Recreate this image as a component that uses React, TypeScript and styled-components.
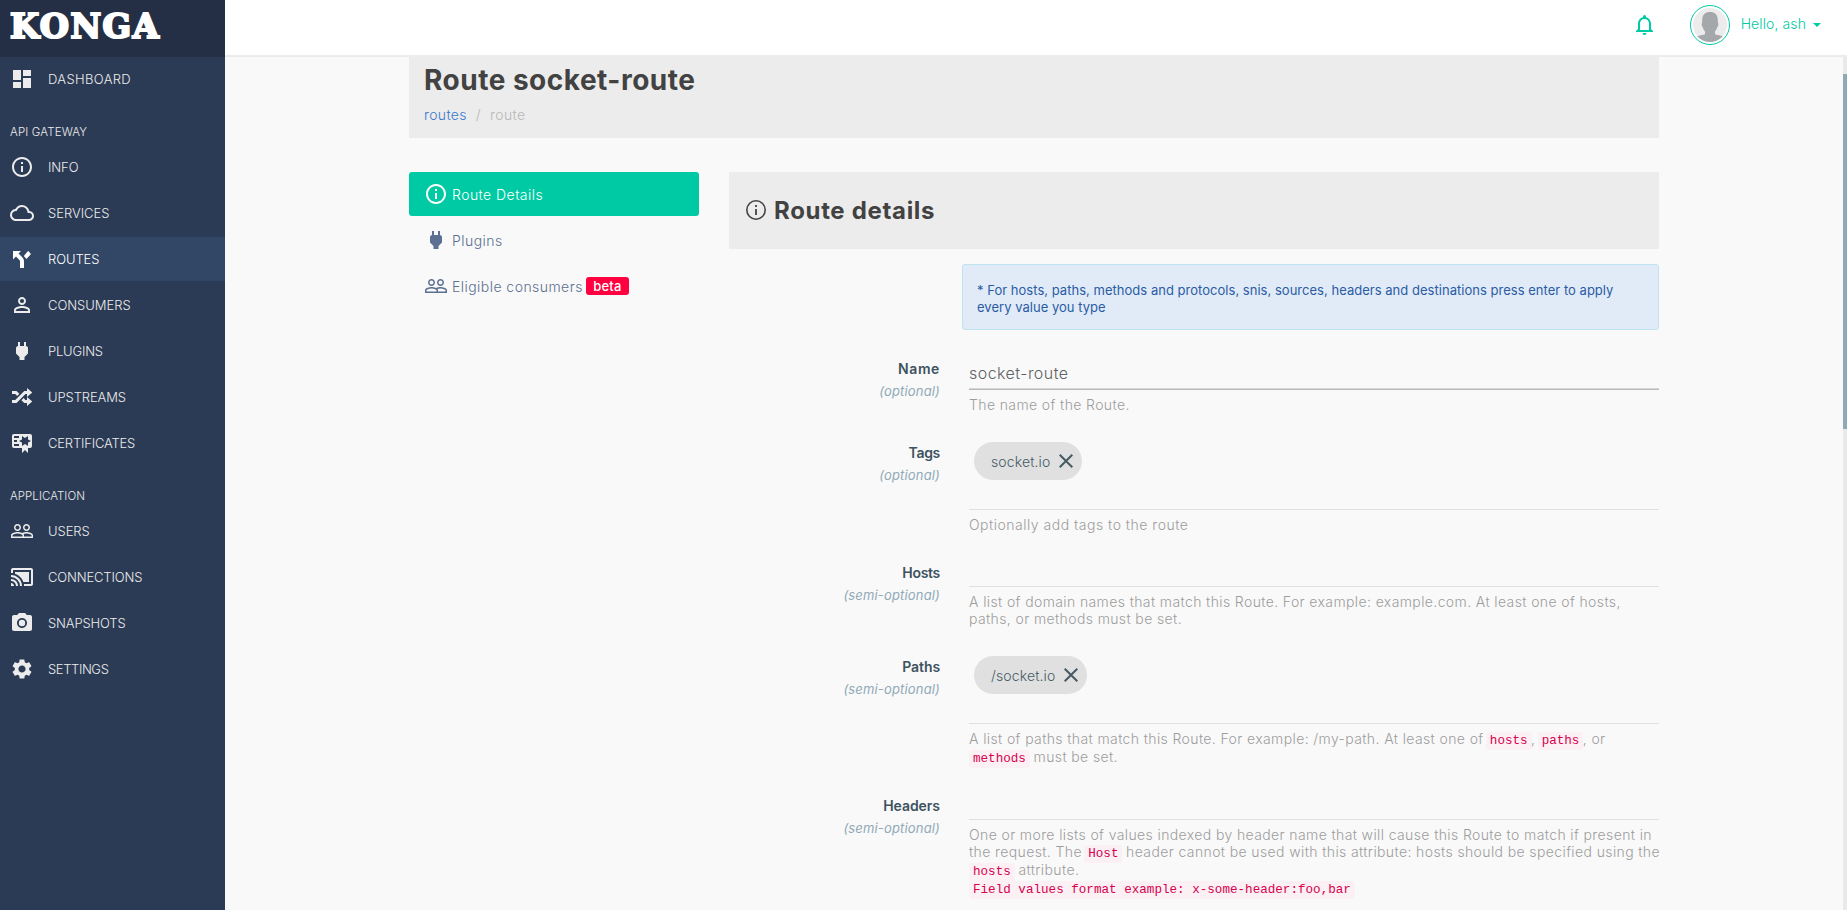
import React from "react";
import styled, { createGlobalStyle } from "styled-components";
import {
  MdDashboard,
  MdInfoOutline,
  MdOutlineCloud,
  MdPersonOutline,
  MdPeopleOutline,
  MdCastConnected,
  MdCameraAlt,
  MdSettings,
} from "react-icons/md";

const teal = "#00caa3";

const GlobalStyle = createGlobalStyle`
  *, *::before, *::after { box-sizing: border-box; }
  body {
    margin: 0;
    background: #f9f9f9;
    font-family: Inter, "Open Sans", sans-serif;
    font-size: 14px;
    font-weight: 300;
    overflow: hidden;
  }
`;

/* ---------- shell ---------- */

const Shell = styled.div`
  display: grid;
  grid-template-columns: 225px 1fr;
  height: 910px;
`;

const Sidebar = styled.aside`
  display: flex;
  flex-direction: column;
  background: #2b3b55;
  color: #ececec;
`;

const Brand = styled.div`
  height: 57px;
  padding: 5px 0 0 10px;
  background: #242f45;
  color: #fff;
  font: bold 33.5px/43px "DejaVu Serif", serif;
  letter-spacing: 1.5px;
  -webkit-text-stroke: 2.2px #fff;
`;

const Nav = styled.nav`
  display: flex;
  flex-direction: column;
  gap: 2px;
`;

const NavItem = styled.a<{ $active?: boolean; $track: number }>`
  display: flex;
  align-items: center;
  gap: 14px;
  height: 44px;
  padding-left: 10px;
  background: ${(p) => (p.$active ? "#324766" : "transparent")};
  color: ${(p) => (p.$active ? "#fff" : "#ececec")};
  font-size: 13px;
  letter-spacing: ${(p) => p.$track}px;
  white-space: nowrap;
  svg {
    flex: none;
    width: 24px;
    height: 24px;
  }
`;

const NavHeading = styled.div<{ $track: number }>`
  height: 44px;
  padding: 21px 0 0 10px;
  font-size: 11.5px;
  line-height: 20px;
  letter-spacing: ${(p) => p.$track}px;
`;

const Page = styled.div`
  display: grid;
  grid-template-rows: 57px 1fr;
  min-width: 0;
`;

const TopBar = styled.header`
  display: flex;
  justify-content: flex-end;
  align-items: center;
  padding: 0 26px 5px 0;
  background: #fff;
  border-bottom: 2px solid #ececec;
  color: ${teal};
`;

const BellIcon = styled.svg`
  width: 24px;
  height: 24px;
  margin-right: 33px;
`;

const Avatar = styled.svg`
  width: 40px;
  height: 40px;
  margin-right: 11px;
`;

const Greeting = styled.span`
  font-size: 14px;
  line-height: 20px;
  padding-bottom: 2px;
  letter-spacing: 0.1px;
`;

const Caret = styled.span`
  margin: 0 0 0 7px;
  border: 4px solid transparent;
  border-top-color: ${teal};
  border-bottom: 0;
`;

const Body = styled.div`
  display: flex;
  height: 853px;
  overflow: hidden;
`;

const Content = styled.main`
  flex: 1;
  padding: 0 184px;
`;

const ScrollTrack = styled.div`
  width: 4px;
  padding-top: 17px;
  background: #e9e9e9;
`;

const ScrollThumb = styled.div`
  height: 355px;
  background: #90a9b5;
`;

/* ---------- page heading ---------- */

const PageHeading = styled.section`
  height: 81px;
  padding: 6px 15px 0;
  background: #ececec;
  color: #424242;
`;

const PageTitle = styled.h1`
  margin: 0;
  font-size: 28px;
  font-weight: 700;
  line-height: 34px;
  letter-spacing: 0.5px;
`;

const Breadcrumb = styled.div`
  display: flex;
  gap: 9px;
  margin-top: 8px;
  line-height: 20px;
  letter-spacing: 0.35px;
  color: #b8b8b8;
  a {
    color: #3a78cc;
  }
`;

const Columns = styled.div`
  display: grid;
  grid-template-columns: 290px 930px;
  column-gap: 30px;
  margin-top: 34px;
`;

const Tabs = styled.div`
  display: flex;
  flex-direction: column;
  gap: 2px;
`;

const Tab = styled.a<{ $active?: boolean }>`
  display: flex;
  align-items: center;
  height: 44px;
  padding-left: 15px;
  border-radius: 3px;
  background: ${(p) => (p.$active ? teal : "transparent")};
  color: ${(p) => (p.$active ? "#fff" : "#5b7092")};
  letter-spacing: 0.45px;
  svg {
    width: 24px;
    height: 24px;
    margin-right: 4px;
  }
`;

const Badge = styled.span`
  margin-left: 3px;
  width: 43px;
  height: 18px;
  border-radius: 3px;
  background: #ff0040;
  color: #fff;
  font-size: 13px;
  font-weight: 500;
  line-height: 18px;
  letter-spacing: 0.2px;
  text-align: center;
`;

const PanelHeading = styled.div`
  display: flex;
  align-items: center;
  gap: 6px;
  height: 77px;
  padding: 0 15px 1px;
  background: #ececec;
  color: #424242;
  svg {
    width: 24px;
    height: 24px;
  }
  h2 {
    margin: 0;
    font-size: 24px;
    font-weight: 700;
    letter-spacing: 0.67px;
  }
`;

const Alert = styled.div`
  height: 66px;
  margin: 15px 0 28px 233px;
  padding: 17px 14px;
  border: 1px solid #bfe3f1;
  border-radius: 3px;
  background: #e0ebf7;
  color: #2b5ba5;
  font-size: 13px;
  font-weight: 400;
  line-height: 17px;
  letter-spacing: 0.025px;
  white-space: nowrap;
`;

/* ---------- form ---------- */

const Form = styled.div`
  display: flex;
  flex-direction: column;
  gap: 29px;
`;

const Group = styled.div`
  display: grid;
  grid-template-columns: 211px 690px;
  column-gap: 29px;
`;

const Label = styled.label`
  line-height: 22px;
  text-align: right;
  color: #3c5361;
`;

const LabelName = styled.div<{ $track: number }>`
  font-size: 14px;
  font-weight: 600;
  letter-spacing: ${(p) => p.$track}px;
  height: 22px;
`;

const Hint = styled.div`
  font-size: 13px;
  font-style: italic;
  font-weight: 400;
  letter-spacing: 0.16px;
  color: #90aab8;
`;

const TextInput = styled.div`
  height: 32px;
  border-bottom: 1px solid #b9b9b9;
  box-shadow: inset 0 -1px 0 #d6d6d6;
  color: #616161;
  font-size: 16px;
  line-height: 30px;
  letter-spacing: 0.45px;
`;

const ChipInput = styled.div<{ $filled?: boolean }>`
  height: ${(p) => (p.$filled ? 68 : 25)}px;
  padding-left: 5px;
  border-bottom: 1px solid #e0e0e0;
`;

const Chip = styled.span`
  display: inline-flex;
  align-items: center;
  height: 38px;
  padding: 0 9px 0 17px;
  border-radius: 19px;
  background: #e0e0e0;
  color: #455a64;
  letter-spacing: 0.12px;
  svg {
    width: 14px;
    height: 14px;
    margin-left: 9px;
  }
`;

const Help = styled.div`
  margin-top: 6px;
  color: #9d9d9d;
`;

const HelpLine = styled.div<{ $tall?: boolean; $track?: number }>`
  height: ${(p) => (p.$tall ? 18 : 17)}px;
  line-height: ${(p) => (p.$tall ? 18 : 17)}px;
  letter-spacing: ${(p) => p.$track ?? 0.385}px;
  white-space: nowrap;
`;

const Code = styled.code<{ $lead?: boolean }>`
  display: inline-block;
  height: 18px;
  margin: 0 -0.7px 0 ${(p) => (p.$lead ? 0 : -2)}px;
  padding: 0 4px;
  border-radius: 3px;
  background: #fbf0f4;
  color: #d8004f;
  font: 400 12.6px/18px "Liberation Mono", monospace;
  letter-spacing: 0;
`;

/* ---------- icons ---------- */

const glyphs = {
  fork: "M3 4V12.5L6 9.5L9.6 13.2Q10 13.6 10 14.2V21H14V14Q14 11.9 12.5 10.4L8.5 6.5L11 4ZM17.6 4.4L14.2 8.4Q13.7 9 14.2 9.5L16 11.6Q16.5 12 17 11.5L20.6 7.6Q21 7 20.5 6.4L18.8 4.4Q18.2 3.8 17.6 4.4Z",
  plug: "M16 7V3H14V7H10V3H8V7C7 7 6 8 6 9V14.5L9.5 18V21H14.5V18L18 14.5V9C18 8 17 7 16 7Z",
  shuffle:
    "M17 3L22.25 7.5L17 12L22.25 16.5L17 21V18H14.26L11.44 15.18L13.56 13.06L15.5 15H17V12V9H15.5L6.5 18H2V15H5.26L14.26 6H17V3M2 6H6.5L9.32 8.82L7.2 10.94L5.26 9H2V6Z",
  certificate:
    "M4 3C2.89 3 2 3.89 2 5V15A2 2 0 0 0 4 17H12V22L15 19L18 22V17H20A2 2 0 0 0 22 15V5A2 2 0 0 0 20 3H4M12 5L15 7L18 5V8.5L21 10L18 11.5V15L15 13L12 15V11.5L9 10L12 8.5V5M4 5H9V7H4V5M4 9H7V11H4V9M4 13H9V15H4V13Z",
  bell: "M16 17H7V10.5C7 8 9 6 11.5 6C14 6 16 8 16 10.5M18 16V10.5C18 7.43 15.86 4.86 13 4.18V3.5A1.5 1.5 0 0 0 11.5 2A1.5 1.5 0 0 0 10 3.5V4.18C7.13 4.86 5 7.43 5 10.5V16L3 18V19H20V18M11.5 22A2 2 0 0 0 13.5 20H9.5A2 2 0 0 0 11.5 22Z",
};

const Glyph = ({ name }: { name: keyof typeof glyphs }) => (
  <svg viewBox="0 0 24 24" fill="currentColor" fillRule={name === "certificate" ? "evenodd" : "nonzero"}>
    <path d={glyphs[name]} />
  </svg>
);

const ThinInfo = () => (
  <svg viewBox="0 0 24 24" fill="none" stroke="currentColor">
    <circle cx="12" cy="12" r="9.2" strokeWidth="1.6" />
    <path d="M12 11V17M12 7V9" strokeWidth="1.8" />
  </svg>
);

const Cross = () => (
  <svg viewBox="0 0 14 14" fill="none" stroke="currentColor" strokeWidth="2">
    <path d="M0.7 0.7L13.3 13.3M13.3 0.7L0.7 13.3" />
  </svg>
);

/* ---------- data ---------- */

type Item = { label: string; icon: React.ReactNode; track: number; active?: boolean };

const overview: Item[] = [{ label: "DASHBOARD", icon: <MdDashboard />, track: 0.36 }];

const gateway: Item[] = [
  { label: "INFO", icon: <MdInfoOutline />, track: -0.1 },
  { label: "SERVICES", icon: <MdOutlineCloud />, track: -0.02 },
  { label: "ROUTES", icon: <Glyph name="fork" />, track: -0.1, active: true },
  { label: "CONSUMERS", icon: <MdPersonOutline />, track: -0.03 },
  { label: "PLUGINS", icon: <Glyph name="plug" />, track: -0.2 },
  { label: "UPSTREAMS", icon: <Glyph name="shuffle" />, track: -0.1 },
  { label: "CERTIFICATES", icon: <Glyph name="certificate" />, track: -0.18 },
];

const application: Item[] = [
  { label: "USERS", icon: <MdPeopleOutline />, track: -0.05 },
  { label: "CONNECTIONS", icon: <MdCastConnected />, track: -0.15 },
  { label: "SNAPSHOTS", icon: <MdCameraAlt />, track: -0.13 },
  { label: "SETTINGS", icon: <MdSettings />, track: -0.4 },
];

const NavList = ({ items }: { items: Item[] }) => (
  <Nav>
    {items.map((item) => (
      <NavItem key={item.label} $active={item.active} $track={item.track}>
        {item.icon}
        {item.label}
      </NavItem>
    ))}
  </Nav>
);

type FieldProps = { name: string; track: number; hint: string; children: React.ReactNode };

const Field = ({ name, track, hint, children }: FieldProps) => (
  <Group>
    <Label>
      <LabelName $track={track}>{name}</LabelName>
      <Hint>({hint})</Hint>
    </Label>
    <div>{children}</div>
  </Group>
);

export default function App() {
  return (
    <Shell>
      <GlobalStyle />
      <Sidebar>
        <Brand>KONGA</Brand>
        <NavList items={overview} />
        <NavHeading $track={0.15}>API GATEWAY</NavHeading>
        <NavList items={gateway} />
        <NavHeading $track={0.05}>APPLICATION</NavHeading>
        <NavList items={application} />
      </Sidebar>

      <Page>
        <TopBar>
          <BellIcon viewBox="0 0 24 24" fill="currentColor">
            <path d={glyphs.bell} />
          </BellIcon>
          <Avatar viewBox="0 0 40 40">
            <defs>
              <clipPath id="face">
                <circle cx="20" cy="20" r="17" />
              </clipPath>
            </defs>
            <circle cx="20" cy="20" r="19.5" fill="#fff" stroke={teal} />
            <circle cx="20" cy="20" r="17" fill="#ececec" />
            <path
              clipPath="url(#face)"
              fill="#a5a8ab"
              d="M20 7C24.8 7 27.6 9.6 27.8 14.5L27.9 18C28.8 18.3 28.4 21.6 27.3 22C26.9 24 26 25.2 25 26.4V29C26 30.3 32 30 35 32.5V40H5V32.5C8 30 14 30.3 15 29V26.4C14 25.2 13.1 24 12.7 22C11.6 21.6 11.2 18.3 12.1 18L12.2 14.5C12.4 9.6 15.2 7 20 7Z"
            />
          </Avatar>
          <Greeting>Hello, ash</Greeting>
          <Caret />
        </TopBar>

        <Body>
          <Content>
            <PageHeading>
              <PageTitle>Route socket-route</PageTitle>
              <Breadcrumb>
                <a>routes</a>
                <span>/</span>
                <span>route</span>
              </Breadcrumb>
            </PageHeading>

            <Columns>
              <Tabs>
                <Tab $active>
                  <MdInfoOutline />
                  Route Details
                </Tab>
                <Tab>
                  <Glyph name="plug" />
                  Plugins
                </Tab>
                <Tab>
                  <MdPeopleOutline />
                  Eligible consumers
                  <Badge>beta</Badge>
                </Tab>
              </Tabs>

              <div>
                <PanelHeading>
                  <ThinInfo />
                  <h2>Route details</h2>
                </PanelHeading>
                <Alert>
                  * For hosts, paths, methods and protocols, snis, sources, headers and destinations press enter to apply
                  <br />
                  every value you type
                </Alert>

                <Form>
                  <Field name="Name" track={0.6} hint="optional">
                    <TextInput>socket-route</TextInput>
                    <Help>
                      <HelpLine>The name of the Route.</HelpLine>
                    </Help>
                  </Field>

                  <Field name="Tags" track={-0.3} hint="optional">
                    <ChipInput $filled>
                      <Chip>
                        socket.io <Cross />
                      </Chip>
                    </ChipInput>
                    <Help>
                      <HelpLine $track={0.5}>Optionally add tags to the route</HelpLine>
                    </Help>
                  </Field>

                  <Field name="Hosts" track={-0.3} hint="semi-optional">
                    <ChipInput />
                    <Help>
                      <HelpLine>
                        A list of domain names that match this Route. For example: example.com. At least one of hosts,
                      </HelpLine>
                      <HelpLine>paths, or methods must be set.</HelpLine>
                    </Help>
                  </Field>

                  <Field name="Paths" track={-0.1} hint="semi-optional">
                    <ChipInput $filled>
                      <Chip>
                        /socket.io <Cross />
                      </Chip>
                    </ChipInput>
                    <Help>
                      <HelpLine $tall>
                        A list of paths that match this Route. For example: /my-path. At least one of <Code>hosts</Code>,{" "}
                        <Code>paths</Code>, or
                      </HelpLine>
                      <HelpLine $tall>
                        <Code $lead>methods</Code> must be set.
                      </HelpLine>
                    </Help>
                  </Field>

                  <Field name="Headers" track={-0.05} hint="semi-optional">
                    <ChipInput />
                    <Help>
                      <HelpLine>
                        One or more lists of values indexed by header name that will cause this Route to match if present in
                      </HelpLine>
                      <HelpLine $tall>
                        the request. The <Code>Host</Code> header cannot be used with this attribute: hosts should be
                        specified using the
                      </HelpLine>
                      <HelpLine $tall>
                        <Code $lead>hosts</Code> attribute.
                      </HelpLine>
                      <HelpLine $tall>
                        <Code $lead>Field values format example: x-some-header:foo,bar</Code>
                      </HelpLine>
                    </Help>
                  </Field>
                </Form>
              </div>
            </Columns>
          </Content>
          <ScrollTrack>
            <ScrollThumb />
          </ScrollTrack>
        </Body>
      </Page>
    </Shell>
  );
}
